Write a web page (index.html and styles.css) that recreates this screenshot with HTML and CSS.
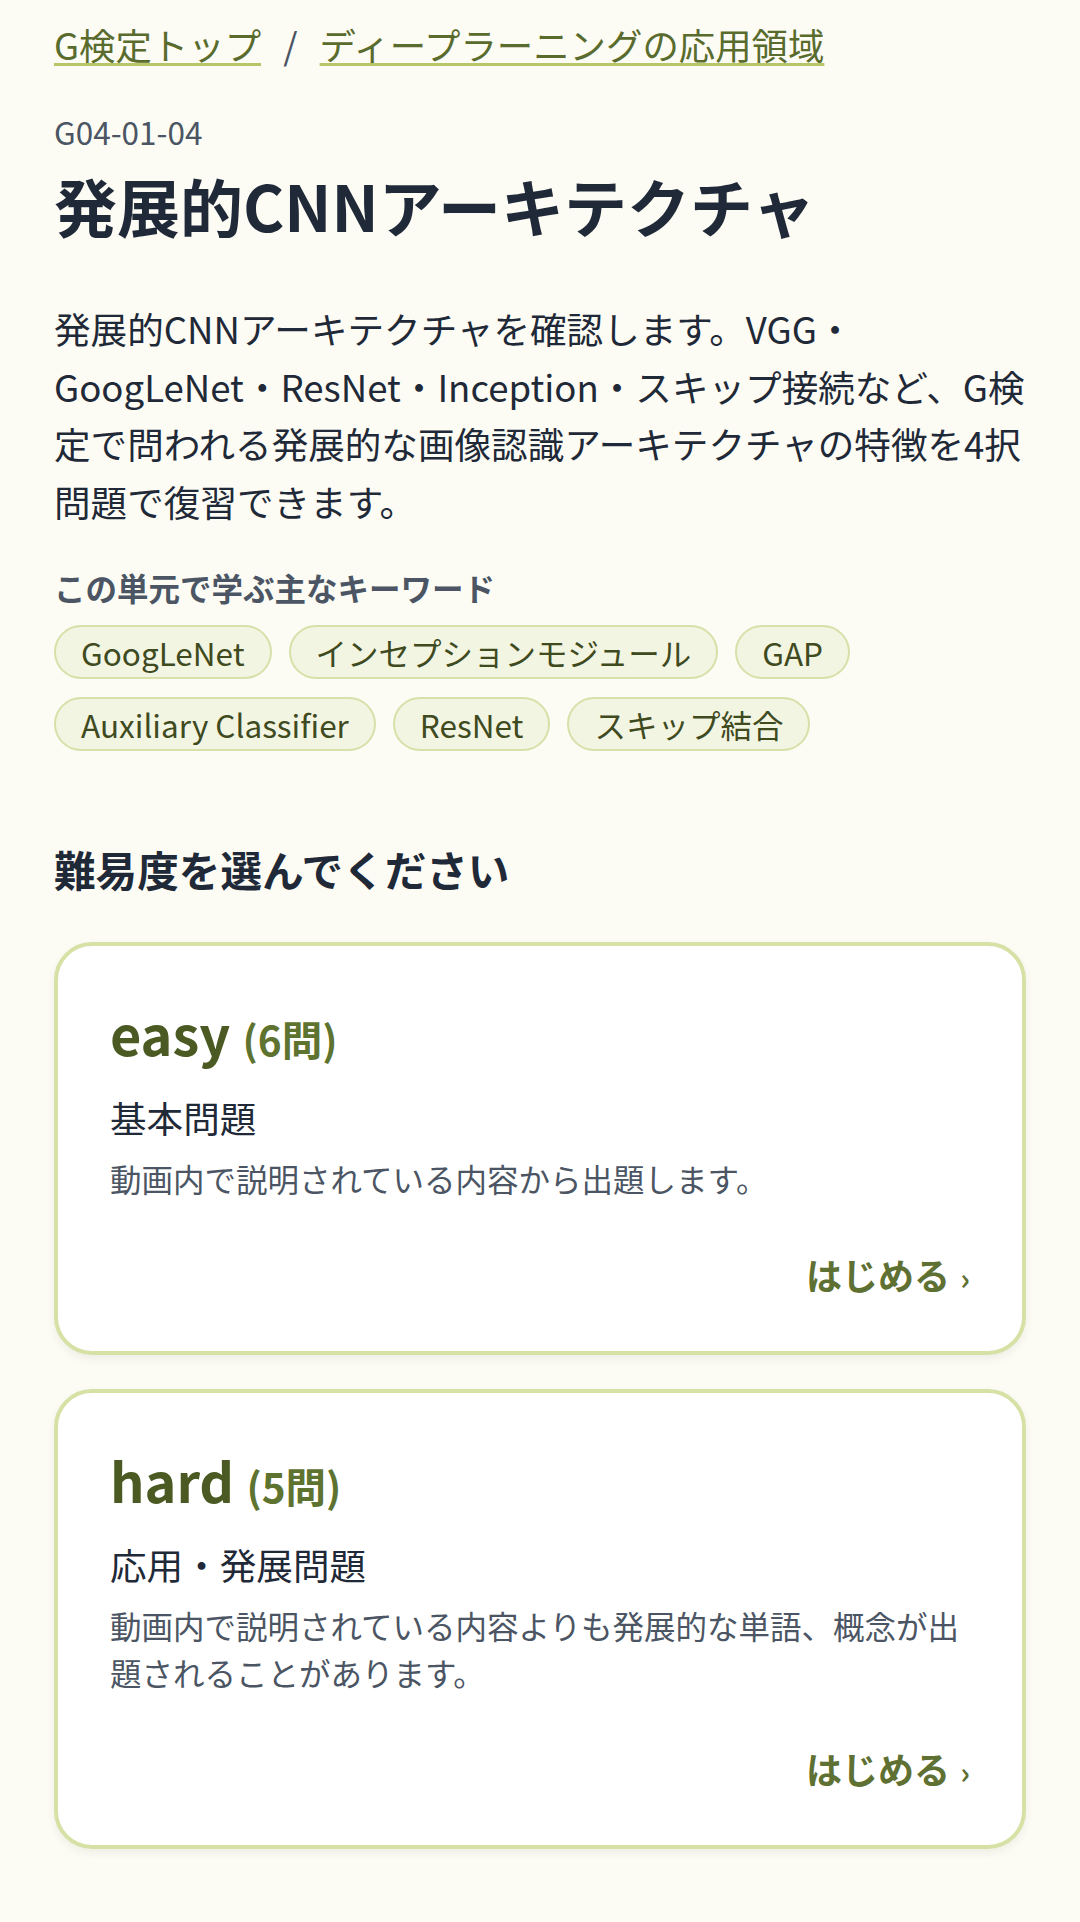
FILE: index.html
```html
<!DOCTYPE html>
<html lang="ja">
<head>
    <meta charset="utf-8">
    <title>発展的CNNアーキテクチャ | G検定</title>
    <link rel="stylesheet" href="styles.css">
</head>
<body>
    <div class="page">
        <nav class="breadcrumb">
            <a href="#">G検定トップ</a>
            <span class="sep">/</span>
            <a href="#">ディープラーニングの応用領域</a>
        </nav>

        <div class="unit-code">G04-01-04</div>
        <h1 class="unit-title">発展的CNNアーキテクチャ</h1>

        <p class="lead">発展的CNNアーキテクチャを確認します。VGG・GoogLeNet・ResNet・Inception・スキップ接続など、G検定で問われる発展的な画像認識アーキテクチャの特徴を4択問題で復習できます。</p>

        <div class="keywords-label">この単元で学ぶ主なキーワード</div>
        <ul class="keywords">
            <li class="chip">GoogLeNet</li>
            <li class="chip">インセプションモジュール</li>
            <li class="chip">GAP</li>
            <li class="chip">Auxiliary Classifier</li>
            <li class="chip">ResNet</li>
            <li class="chip">スキップ結合</li>
        </ul>

        <h2 class="section-title">難易度を選んでください</h2>

        <div class="levels">
            <a class="level-card" href="#">
                <div class="level-name">easy <span class="count">(6問)</span></div>
                <div class="level-sub">基本問題</div>
                <p class="level-desc">動画内で説明されている内容から出題します。</p>
                <div class="level-start">はじめる <span class="chev">›</span></div>
            </a>
            <a class="level-card" href="#">
                <div class="level-name">hard <span class="count">(5問)</span></div>
                <div class="level-sub">応用・発展問題</div>
                <p class="level-desc">動画内で説明されている内容よりも発展的な単語、概念が出題されることがあります。</p>
                <div class="level-start">はじめる <span class="chev">›</span></div>
            </a>
        </div>
    </div>
</body>
</html>
```

FILE: styles.css
```css
body {
    margin: 0;
    background-color: #fcfcf5;
    color: #1f2937;
    font-family: "Noto Sans CJK JP", "Noto Sans", sans-serif;
}
.page {
    padding: 17px 54px 60px;
}
.breadcrumb {
    font-size: 36.4px;
    line-height: 54px;
}
.breadcrumb a {
    color: #5a6b2e;
    text-decoration: underline;
    text-decoration-color: #b6c46a;
    text-decoration-thickness: 3px;
    text-underline-offset: 3px;
}
.breadcrumb .sep {
    color: #4b5563;
    margin: 0 14px;
}
.unit-code {
    margin-top: 37px;
    font-size: 31.5px;
    line-height: 47px;
    color: #4b5563;
}
.unit-title {
    margin: 9px 0 0;
    font-size: 63px;
    line-height: 82px;
    font-weight: 700;
    color: #1f2937;
}
.lead {
    margin: 54px -6px 0 0;
    font-size: 36.6px;
    line-height: 57.6px;
    color: #1f2937;
}
.keywords-label {
    margin-top: 34px;
    font-size: 31.5px;
    line-height: 47px;
    font-weight: 700;
    color: #4b5563;
}
.keywords {
    list-style: none;
    margin: 14px 0 0;
    padding: 0;
    display: flex;
    flex-wrap: wrap;
    gap: 18px 17px;
}
.chip {
    height: 54px;
    box-sizing: border-box;
    padding: 0 25px;
    border: 2px solid #d6e0a8;
    border-radius: 999px;
    background-color: #f2f5e2;
    color: #3f4a1f;
    font-size: 31.5px;
    line-height: 50px;
}
.section-title {
    margin: 90px 0 0;
    font-size: 41.6px;
    line-height: 57px;
    font-weight: 700;
    color: #1f2937;
}
.levels {
    margin-top: 44px;
    display: flex;
    flex-direction: column;
    gap: 34px;
}
.level-card {
    display: block;
    padding: 49px 52px 47px;
    border: 4.5px solid #d6e1a6;
    border-radius: 38px;
    background-color: #ffffff;
    box-shadow: 0 4px 10px rgba(0, 0, 0, 0.06);
    text-decoration: none;
    color: inherit;
}
.level-name {
    font-size: 54px;
    line-height: 76px;
    font-weight: 700;
    color: #4a5a22;
}
.level-name .count {
    font-size: 40.5px;
    color: #5f7330;
}
.level-sub {
    margin-top: 14px;
    font-size: 36.6px;
    line-height: 54px;
    color: #1f2937;
}
.level-desc {
    margin: 10px 0 0;
    font-size: 31.5px;
    line-height: 47px;
    color: #4b5563;
}
.level-start {
    margin-top: 45px;
    text-align: right;
    font-size: 36px;
    line-height: 54px;
    font-weight: 700;
    color: #5f7033;
}
.level-start .chev {
    font-size: 30px;
    margin-left: 2px;
}
```
